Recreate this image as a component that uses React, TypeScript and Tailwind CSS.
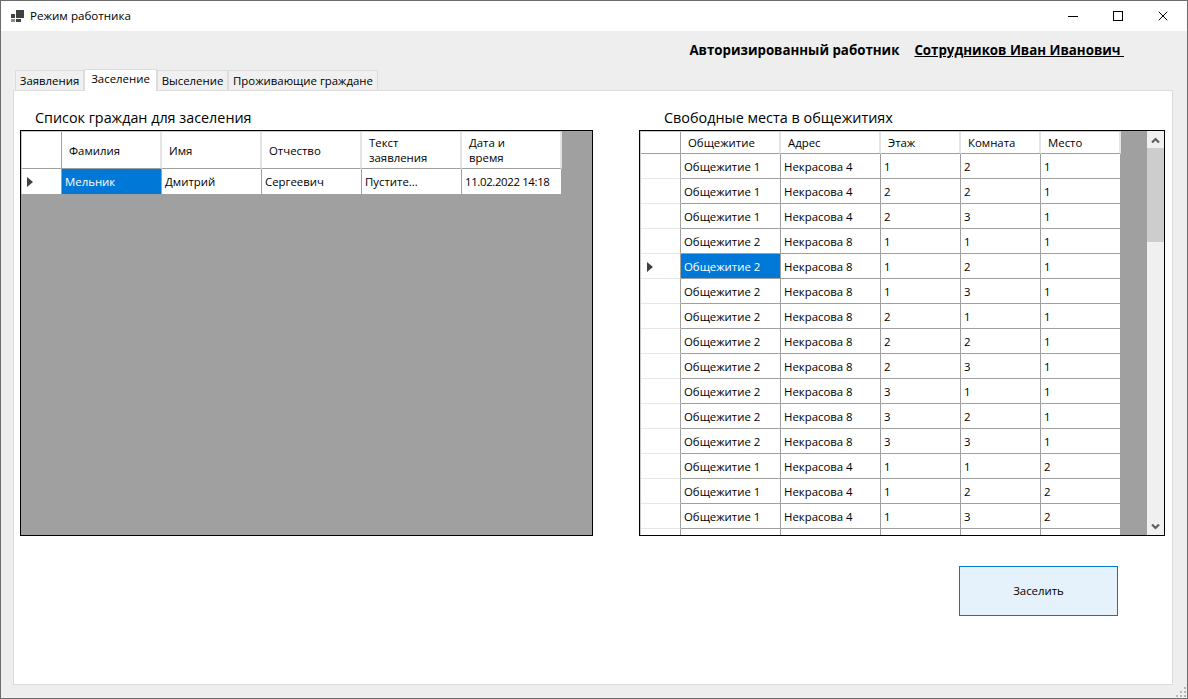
import React from 'react';
import { X } from 'lucide-react';

const tabs = [
  { label: 'Заявления', width: 'w-[69px]' },
  { label: 'Заселение', width: 'w-[73px]', active: true },
  { label: 'Выселение', width: 'w-[71px]' },
  { label: 'Проживающие граждане', width: 'w-[150px]' },
];

const leftColumns = ['Фамилия', 'Имя', 'Отчество', 'Текст заявления', 'Дата и время'];
const leftRow = ['Мельник', 'Дмитрий', 'Сергеевич', 'Пустите...', '11.02.2022 14:18'];

const rightColumns = [
  { label: 'Общежитие', width: 'w-[100px]' },
  { label: 'Адрес', width: 'w-[100px]' },
  { label: 'Этаж', width: 'w-[80px]' },
  { label: 'Комната', width: 'w-[80px]' },
  { label: 'Место', width: 'w-[80px]' },
];

const places = [
  ['Общежитие 1', 'Некрасова 4', '1', '2', '1'],
  ['Общежитие 1', 'Некрасова 4', '2', '2', '1'],
  ['Общежитие 1', 'Некрасова 4', '2', '3', '1'],
  ['Общежитие 2', 'Некрасова 8', '1', '1', '1'],
  ['Общежитие 2', 'Некрасова 8', '1', '2', '1'],
  ['Общежитие 2', 'Некрасова 8', '1', '3', '1'],
  ['Общежитие 2', 'Некрасова 8', '2', '1', '1'],
  ['Общежитие 2', 'Некрасова 8', '2', '2', '1'],
  ['Общежитие 2', 'Некрасова 8', '2', '3', '1'],
  ['Общежитие 2', 'Некрасова 8', '3', '1', '1'],
  ['Общежитие 2', 'Некрасова 8', '3', '2', '1'],
  ['Общежитие 2', 'Некрасова 8', '3', '3', '1'],
  ['Общежитие 1', 'Некрасова 4', '1', '1', '2'],
  ['Общежитие 1', 'Некрасова 4', '1', '2', '2'],
  ['Общежитие 1', 'Некрасова 4', '1', '3', '2'],
  ['', '', '', '', ''],
];

const RowArrow = () => (
  <svg width="6" height="10" viewBox="0 0 6 10">
    <path d="M0 0 L6 5 L0 10 Z" fill="#404040" />
  </svg>
);

const App = () => {
  return (
    <div className="w-[1188px] h-[699px] flex flex-col bg-[#eeeeee] border border-[#6b6b6b] overflow-hidden font-['Open_Sans','Noto_Sans',sans-serif] text-[11.4px] text-black">
      {/* Title bar */}
      <div className="h-[30px] shrink-0 bg-white flex items-center">
        <svg className="ml-[10px] mt-[-1px]" width="13" height="12" viewBox="0 0 13 12">
          <rect x="5" y="0" width="8" height="8" fill="#404040" />
          <rect x="0" y="4" width="4" height="4" fill="#404040" />
          <rect x="5" y="9" width="5" height="3" fill="#404040" />
          <rect x="0" y="9" width="4" height="3" fill="#8a8a8a" />
        </svg>
        <span className="ml-[6px] text-[11.6px]">Режим работника</span>
        <div className="ml-auto flex items-center">
          <div className="w-[45px] h-[30px] flex items-center justify-center">
            <div className="w-[10px] h-px bg-black" />
          </div>
          <div className="w-[45px] h-[30px] flex items-center justify-center">
            <div className="w-[10px] h-[10px] border border-black" />
          </div>
          <div className="w-[45px] h-[30px] mr-[2px] flex items-center justify-center">
            <X size={16} strokeWidth={1} absoluteStrokeWidth />
          </div>
        </div>
      </div>

      {/* Authorized worker */}
      <div className="h-[37px] shrink-0 flex justify-end items-start pt-[10px] pr-[63px] font-bold text-[13.3px] leading-[18px]">
        <span>Авторизированный работник</span>
        <span className="ml-[15px] underline whitespace-pre">Сотрудников Иван Иванович </span>
      </div>

      {/* Tabs */}
      <div className="h-[22px] shrink-0 flex items-end pl-[14px] relative z-10">
        {tabs.map((tab) =>
          tab.active ? (
            <div
              key={tab.label}
              className={`${tab.width} h-[22px] -mb-px bg-white border border-b-0 border-[#dcdcdc] text-center leading-[17px]`}
            >
              {tab.label}
            </div>
          ) : (
            <div
              key={tab.label}
              className={`${tab.width} h-[20px] bg-[#f0f0f0] border border-b-0 border-[#dcdcdc] text-center leading-[19px]`}
            >
              {tab.label}
            </div>
          )
        )}
      </div>

      {/* Tab page */}
      <div className="ml-[12px] w-[1160px] h-[595px] shrink-0 bg-white border border-[#dcdcdc] pl-[6px] flex flex-col">
        <div className="flex gap-[46px]">
          {/* Citizens */}
          <div className="w-[573px]">
            <div className="h-[39px] pt-[17px] pl-[15px] text-[14.35px] leading-[20px]">Список граждан для заселения</div>
            <div className="h-[406px] border border-black bg-[#a0a0a0]">
              <div className="w-[541px] border-t border-l border-[#c8c8c8]">
                <div className="flex h-[37px] bg-white">
                  <div className="w-[40px] border-r border-b border-[#a0a0a0]" />
                  {leftColumns.map((col) => (
                    <div
                      key={col}
                      className="w-[100px] pl-[7px] pr-[20px] flex items-center border-r-2 border-b border-r-[#e3e3e3] border-b-[#a0a0a0] leading-[15px]"
                    >
                      {col}
                    </div>
                  ))}
                </div>
                <div className="flex h-[25px] bg-white">
                  <div className="w-[40px] pl-[5px] flex items-center border-r border-[#a0a0a0]">
                    <RowArrow />
                  </div>
                  {leftRow.map((value, i) => (
                    <div
                      key={value}
                      className={`w-[100px] pl-[3px] flex items-center border-r border-[#a0a0a0] ${i === 0 ? 'bg-[#0078d7] text-white' : ''} ${i === 4 ? 'tracking-[-0.35px]' : ''}`}
                    >
                      {value}
                    </div>
                  ))}
                </div>
              </div>
            </div>
          </div>

          {/* Free places */}
          <div className="w-[526px]">
            <div className="h-[39px] pt-[17px] pl-[25px] text-[14.4px] leading-[20px]">Свободные места в общежитиях</div>
            <div className="h-[406px] border border-black bg-[#a0a0a0] flex overflow-hidden">
              <div className="w-[481px] shrink-0 h-full overflow-hidden border-t border-l border-[#c8c8c8]">
                <div className="flex h-[22px] bg-white">
                  <div className="w-[40px] border-r border-b border-[#a0a0a0]" />
                  {rightColumns.map((col) => (
                    <div
                      key={col.label}
                      className={`${col.width} pl-[7px] flex items-center border-r-2 border-b border-r-[#e3e3e3] border-b-[#a0a0a0]`}
                    >
                      {col.label}
                    </div>
                  ))}
                </div>
                {places.map((row, r) => (
                  <div key={r} className="flex h-[25px] bg-white">
                    <div className="w-[40px] pl-[6px] pt-[2px] flex items-center border-r border-r-[#a0a0a0] border-b border-b-[#e6e6e6]">
                      {r === 4 && <RowArrow />}
                    </div>
                    {row.map((value, i) => (
                      <div
                        key={i}
                        className={`${rightColumns[i].width} pl-[3px] pt-[2px] flex items-center border-r border-b border-[#a0a0a0] ${r === 4 && i === 0 ? 'bg-[#0078d7] text-white' : ''}`}
                      >
                        {value}
                      </div>
                    ))}
                  </div>
                ))}
              </div>
              <div className="w-[26px] shrink-0" />
              {/* Scrollbar */}
              <div className="w-[17px] shrink-0 bg-[#f0f0f0] flex flex-col items-center">
                <div className="h-[17px] flex items-center justify-center">
                  <svg width="9" height="6" viewBox="0 0 9 6">
                    <path d="M1 5.5 L4.5 2 L8 5.5" fill="none" stroke="#606060" strokeWidth="2.2" />
                  </svg>
                </div>
                <div className="w-full h-[94px] bg-[#cdcdcd]" />
                <div className="mt-auto h-[17px] flex items-center justify-center">
                  <svg width="9" height="6" viewBox="0 0 9 6">
                    <path d="M1 .5 L4.5 4 L8 .5" fill="none" stroke="#606060" strokeWidth="2.2" />
                  </svg>
                </div>
              </div>
            </div>
          </div>
        </div>

        <div className="flex justify-end mt-[30px] pr-[54px]">
          <button className="w-[159px] h-[50px] bg-[#e5f1fb] border border-[#0078d7] text-[11.4px]">Заселить</button>
        </div>
      </div>

      {/* Resize grip */}
      <div className="flex-1 flex justify-end items-end pr-[1px] pb-[1px]">
        <svg width="10" height="10" viewBox="0 0 10 10" fill="#b8b8b8">
          <rect x="8" y="0" width="2" height="2" />
          <rect x="4" y="4" width="2" height="2" />
          <rect x="8" y="4" width="2" height="2" />
          <rect x="0" y="8" width="2" height="2" />
          <rect x="4" y="8" width="2" height="2" />
          <rect x="8" y="8" width="2" height="2" />
        </svg>
      </div>
    </div>
  );
};

export default App;
